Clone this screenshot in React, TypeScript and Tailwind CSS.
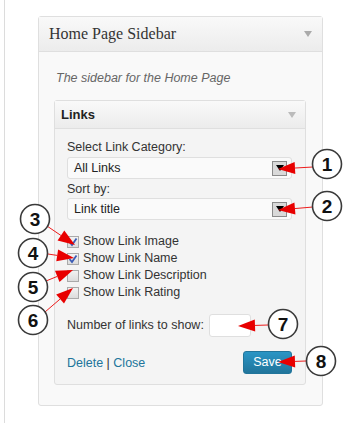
import React from 'react';

const font = { fontFamily: '"Liberation Sans", Arial, sans-serif' };

function Tri({ className }: { className: string }) {
  return (
    <svg width="8" height="6" viewBox="0 0 8 6" className={className}>
      <path d="M0 0h8L4 6z" fill="currentColor" />
    </svg>
  );
}

function SelectBox({ value }: { value: string }) {
  return (
    <div className="flex h-[22px] w-[225px] items-center justify-between rounded-[3px] border border-[#dfdfdf] bg-[#fafafa] pl-[6px] pr-[4px] text-[12.5px] text-[#222]">
      <span>{value}</span>
      <span className="flex h-[15px] w-[15px] items-center justify-center border border-[#8a8a8a] bg-[#d9d9d9]">
        <Tri className="text-black" />
      </span>
    </div>
  );
}

function Check({ checked, label }: { checked: boolean; label: string }) {
  return (
    <div className="flex h-[17px] items-center gap-[4px] text-[12.5px] text-[#333]">
      <span className="flex h-[12px] w-[12px] items-center justify-center border border-[#aaa] bg-gradient-to-b from-[#f2f2f2] to-[#dcdcdc]">
        {checked && (
          <svg width="10" height="10" viewBox="0 0 10 10">
            <path d="M1.5 5l2.5 3L8.5 1.5" stroke="#3a5bb5" strokeWidth="1.8" fill="none" />
          </svg>
        )}
      </span>
      <span>{label}</span>
    </div>
  );
}

// callout circles with red pointer arrows
const callouts = [
  { n: '1', cx: 327, cy: 164, from: [313, 167], tip: [278, 169] },
  { n: '2', cx: 327, cy: 206, from: [313, 207], tip: [278, 210] },
  { n: '3', cx: 35, cy: 219, from: [47, 226], tip: [75, 245] },
  { n: '4', cx: 33, cy: 253, from: [48, 254], tip: [74, 258] },
  { n: '5', cx: 33, cy: 287, from: [46, 281], tip: [73, 270] },
  { n: '6', cx: 33, cy: 320, from: [45, 312], tip: [73, 288] },
  { n: '7', cx: 283, cy: 324, from: [268, 325], tip: [238, 326] },
  { n: '8', cx: 321, cy: 361, from: [306, 361], tip: [278, 362] },
];

function Callouts() {
  return (
    <svg className="pointer-events-none absolute inset-0" width="345" height="423">
      {callouts.map((c) => {
        const [fx, fy] = c.from;
        const [tx, ty] = c.tip;
        const dx = fx - tx;
        const dy = fy - ty;
        const len = Math.hypot(dx, dy);
        const ux = dx / len;
        const uy = dy / len;
        const bx = tx + ux * 17;
        const by = ty + uy * 17;
        const px = -uy * 6;
        const py = ux * 6;
        return (
          <g key={c.n}>
            <line x1={fx} y1={fy} x2={bx} y2={by} stroke="#ee1c1c" strokeWidth="1" />
            <polygon points={`${tx},${ty} ${bx + px},${by + py} ${bx - px},${by - py}`} fill="#e80000" />
            <circle cx={c.cx} cy={c.cy} r="14.5" fill="#fff" stroke="#3a3a3a" strokeWidth="1.6" />
            <text
              x={c.cx}
              y={c.cy + 6.5}
              textAnchor="middle"
              fontSize="19"
              fontWeight="bold"
              fill="#111"
              style={font}
            >
              {c.n}
            </text>
          </g>
        );
      })}
    </svg>
  );
}

export default function App() {
  return (
    <div className="relative flex h-[423px] w-[345px] overflow-hidden bg-white" style={font}>
      <div className="ml-[4px] h-full border-l border-[#dcdcdc] pl-[33px] pt-[16px]">
        <div className="w-[285px] rounded-[3px] border border-[#dfdfdf] bg-[#f9f9f9]">
          <div className="flex h-[35px] items-center justify-between border-b border-[#dfdfdf] bg-gradient-to-b from-[#f9f9f9] to-[#ececec] pl-[10px] pr-[10px]">
            <span className="text-[16px] text-[#333]" style={{ fontFamily: '"Liberation Serif", "Times New Roman", serif' }}>
              Home Page Sidebar
            </span>
            <Tri className="text-[#aaa]" />
          </div>
          <div className="px-[15px] pb-[20px] pt-[18px]">
            <p className="pl-[2px] text-[12.5px] italic leading-[16px] text-[#666]">The sidebar for the Home Page</p>
            <div className="mt-[14px] w-[252px] rounded-[3px] border border-[#dfdfdf] bg-[#f4f4f4]">
              <div className="flex h-[28px] items-center justify-between border-b border-[#dfdfdf] bg-gradient-to-b from-[#f9f9f9] to-[#ececec] pl-[6px] pr-[9px]">
                <span className="text-[13px] font-bold text-[#222]">Links</span>
                <Tri className="text-[#bbb]" />
              </div>
              <div className="pl-[12px] pr-[13px] pb-[10px] pt-[10px]">
                <div className="text-[12.5px] leading-[16px] text-[#333]">Select Link Category:</div>
                <div className="mt-[2px]">
                  <SelectBox value="All Links" />
                </div>
                <div className="mt-[2px] text-[12.5px] leading-[16px] text-[#333]">Sort by:</div>
                <div className="mt-[1px]">
                  <SelectBox value="Link title" />
                </div>
                <div className="mt-[13px] flex flex-col">
                  <Check checked label="Show Link Image" />
                  <Check checked label="Show Link Name" />
                  <Check checked={false} label="Show Link Description" />
                  <Check checked={false} label="Show Link Rating" />
                </div>
                <div className="mt-[13px] flex items-center gap-[5px] text-[12.5px] text-[#333]">
                  <span>Number of links to show:</span>
                  <span className="h-[23px] w-[42px] rounded-[3px] border border-[#dfdfdf] bg-white" />
                </div>
                <div className="mt-[14px] flex items-center justify-between">
                  <div className="pt-[2px] text-[12.5px] text-[#21759b]">
                    Delete <span className="text-[#333]">|</span> Close
                  </div>
                  <button className="h-[23px] w-[49px] rounded-[3px] border border-[#21759b] bg-gradient-to-b from-[#2a95c5] to-[#21759b] text-[12.5px] text-white">
                    Save
                  </button>
                </div>
              </div>
            </div>
          </div>
        </div>
      </div>
      <Callouts />
    </div>
  );
}
